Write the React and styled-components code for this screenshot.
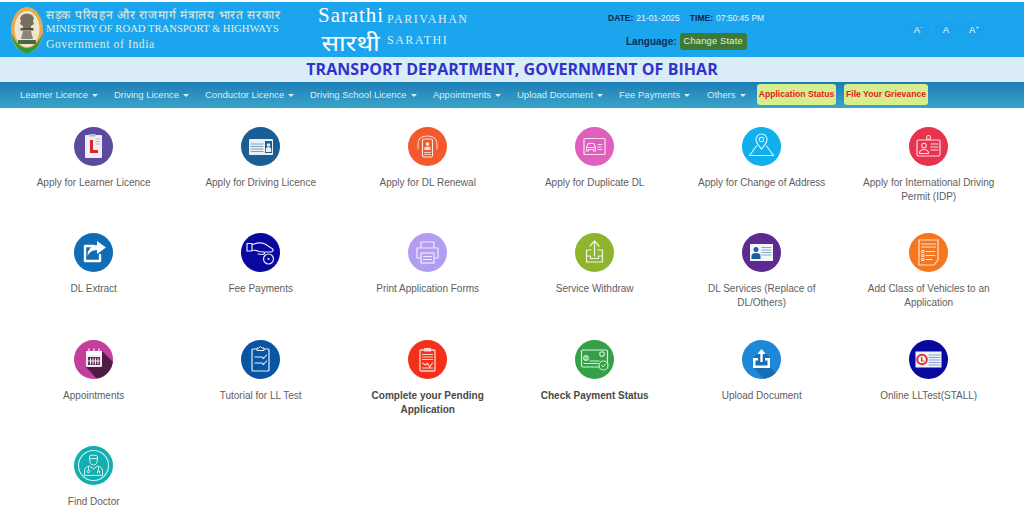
import React from 'react'
import styled, { createGlobalStyle } from 'styled-components'

const GlobalStyle = createGlobalStyle`
  html, body { margin: 0; padding: 0; background: #fff; overflow: hidden; }
  body { font-family: "Liberation Sans", Arial, sans-serif; }
`

const Page = styled.div`
  width: 1024px;
  height: 518px;
  padding-top: 2px;
  box-sizing: border-box;
  background: #fff;
`
const Header = styled.header`
  height: 55px;
  background: #1ca5ef;
  display: flex;
  align-items: center;
  padding-left: 11px;
  box-sizing: border-box;
`
const Emblem = styled.svg`
  width: 32px;
  height: 46px;
  flex: none;
`
const Ministry = styled.div`
  width: 274px;
  margin-left: 3px;
  flex: none;
  color: #e4ecd8;
  font-family: "Liberation Serif", serif;
`
const MinistryLine = styled.div`
  font-size: ${p => p.$size}px;
  letter-spacing: ${p => p.$spacing || 0}px;
  line-height: 14.5px;
  white-space: nowrap;
`
const Logo = styled.div`
  width: 62px;
  margin-right: 5px;
  flex: none;
  color: #fff;
  font-family: "Liberation Serif", serif;
  display: flex;
  flex-direction: column;
  align-items: center;
`
const LogoLatin = styled.span`
  font-size: 21px;
  line-height: 24px;
  letter-spacing: 0.9px;
`
const LogoHindi = styled.span`
  font-size: 22px;
  line-height: 30px;
  font-family: "Noto Sans", "Liberation Serif", serif;
  transform: scaleX(1.18);
`
const Brand = styled.div`
  width: 221px;
  flex: none;
  color: #dcecf4;
  font-family: "Liberation Serif", serif;
  font-size: 12px;
  letter-spacing: 1.5px;
  line-height: 21px;
`
const Clock = styled.div`
  width: 298px;
  flex: none;
  font-size: 8.5px;
  color: #e6f3fb;
`
const ClockRow = styled.div`
  display: flex;
  align-items: center;
  height: ${p => p.$height}px;
  padding-left: ${p => p.$indent}px;
  gap: ${p => p.$gap || 0}px;
`
const Label = styled.b`
  color: ${p => p.$dark ? '#0c2f5c' : '#10264a'};
  font-size: ${p => p.$size || 8.5}px;
  margin-right: 3px;
`
const StateButton = styled.span`
  background: #3f7a34;
  color: #e6efdc;
  font-size: 9.3px;
  padding: 0 4px;
  height: 17px;
  line-height: 17px;
  border-radius: 3px;
  letter-spacing: 0.2px;
`
const SizeButtons = styled.div`
  display: flex;
  gap: 4px;
`
const SizeButton = styled.span`
  width: 24px;
  height: 18px;
  line-height: 18px;
  text-align: center;
  font-size: 9.5px;
  color: #eef8fd;
  background: #1aa3ec;
  border-radius: 9px;
`
const Sup = styled.sup`
  font-size: 6px;
  line-height: 0;
`
const Band = styled.div`
  height: 25px;
  background: #d9ecf7;
  display: flex;
  align-items: center;
  justify-content: center;
  padding-bottom: 1px;
  box-sizing: border-box;
`
const Title = styled.h1`
  margin: 0;
  font-family: "Open Sans", sans-serif;
  font-size: 16px;
  font-weight: 700;
  color: #3232cc;
  letter-spacing: 0.05px;
`
const Nav = styled.nav`
  height: 26px;
  padding: 0 0 1px 20px;
  background: linear-gradient(#1d7db6, #3aa5ca);
  display: flex;
  align-items: center;
  box-sizing: border-box;
`
const NavItem = styled.a`
  width: ${p => p.$width}px;
  flex: none;
  color: #d8edf6;
  font-size: 9.5px;
  white-space: nowrap;
`
const Caret = styled.span`
  display: inline-block;
  margin-left: 4px;
  vertical-align: middle;
  border-top: 3px solid #d8edf6;
  border-left: 3px solid transparent;
  border-right: 3px solid transparent;
`
const Pill = styled.a`
  flex: none;
  width: ${p => p.$width}px;
  height: 21px;
  margin-right: 8px;
  line-height: 21px;
  text-align: center;
  background: #d6ee8e;
  color: #e4201a;
  font-size: 8.6px;
  font-weight: 700;
  border-radius: 3px;
  white-space: nowrap;
`
const Grid = styled.main`
  display: grid;
  grid-template-columns: repeat(6, 167px);
  grid-auto-rows: 106.4px;
  padding-left: 10.2px;
`
const Tile = styled.a`
  display: flex;
  flex-direction: column;
  align-items: center;
  padding-top: 19px;
  box-sizing: border-box;
`
const Badge = styled.span`
  width: 39px;
  height: 39px;
  flex: none;
  border-radius: 50%;
  overflow: hidden;
  background: ${p => p.$bg};
  svg { display: block; width: 39px; height: 39px; }
`
const Caption = styled.span`
  margin-top: 10px;
  width: 150px;
  text-align: center;
  color: ${p => p.$bold ? '#484848' : '#5e5e5e'};
  font-size: 10px;
  font-weight: ${p => p.$bold ? 700 : 400};
  line-height: 14px;
`

const Line = ({ d, w = 1, c = '#fff' }) => (
  <path d={d} fill="none" stroke={c} strokeWidth={w} strokeLinecap="round" strokeLinejoin="round" />
)

const icons = {
  learner: (
    <>
      <rect x="11" y="8" width="17" height="23" rx="1" fill="#f1eff6" />
      <rect x="15" y="7" width="7" height="2.5" fill="#b9b4cf" />
      <path d="M16 13h3v10h5v3h-8z" fill="#d9252b" />
      <Line d="M22 12h4M22 14.5h4M22 17h4" w={0.8} c="#c9a0b0" />
    </>
  ),
  driving: (
    <>
      <rect x="8" y="12" width="24" height="16" rx="1" fill="#e9f0f6" />
      <rect x="24" y="14" width="7" height="12" fill="#1a5e96" />
      <circle cx="27.5" cy="18" r="1.8" fill="#e9f0f6" />
      <path d="M24.8 25v-3q0-2 2.7-2t2.7 2v3z" fill="#e9f0f6" />
      <Line d="M10 17h12M10 19.5h12M10 22h12M10 24.5h12" w={1} c="#7fa3c2" />
    </>
  ),
  renewal: (
    <>
      <Line d="M10 22v-5q0-8 9.500-8t9.500 8v5" w={1.100} c="#fbd2c2" />
      <rect x="14.500" y="12" width="10" height="18" rx="1.500" fill="none" stroke="#fde6dc" strokeWidth="1.100" />
      <circle cx="19.500" cy="17" r="1.800" fill="#fde6dc" />
      <path d="M16.500 23v-2q0-1.500 3-1.500t3 1.500v2z" fill="#fde6dc" />
      <Line d="M16.500 25.500h6M16.500 27.500h6" w={0.8} c="#fde6dc" />
    </>
  ),
  duplicate: (
    <>
      <rect x="9" y="11.500" width="21" height="16" rx="1" fill="none" stroke="#fbdff2" strokeWidth="1.200" />
      <path d="M11.500 24v-4l1.800-3.500h5.400l1.800 3.500v4h-2v-1.500h-5V24z" fill="none" stroke="#fbdff2" strokeWidth="1.100" />
      <Line d="M12 20.500h8" w={1} c="#fbdff2" />
      <Line d="M23 17.500h4M23 20h3M23 22.500h4" w={1} c="#fbdff2" />
    </>
  ),
  address: (
    <>
      <path d="M19.500 22q-5.500-6-5.500-9.500a5.500 5.500 0 0 1 11 0q0 3.500-5.500 9.500z" fill="none" stroke="#d8f2fd" strokeWidth="1.200" />
      <circle cx="19.500" cy="12.500" r="2.200" fill="none" stroke="#d8f2fd" strokeWidth="1.100" />
      <Line d="M14.500 19l-7 9.500h24l-7-9.500" w={1.200} c="#d8f2fd" />
    </>
  ),
  idp: (
    <>
      <rect x="8" y="13" width="23" height="16" rx="1.500" fill="none" stroke="#fbdbe0" strokeWidth="1.200" />
      <circle cx="19.500" cy="10.500" r="2" fill="none" stroke="#fbdbe0" strokeWidth="1.100" />
      <circle cx="15" cy="18.500" r="2.300" fill="none" stroke="#fbdbe0" strokeWidth="1.100" />
      <Line d="M10.500 26.500q0-4 4.500-4t4.500 4z" w={1.100} c="#fbdbe0" />
      <Line d="M22 17h7M22 20h7M22 23h7" w={1.200} c="#fbdbe0" />
    </>
  ),
  extract: (
    <>
      <Line d="M20 13h-9v15h15v-6" w={2.400} />
      <path d="M23 8l9 6.500-9 6.500v-4q-7 0-9.500 6 0-10 9.500-11z" fill="#fff" />
    </>
  ),
  fee: (
    <>
      <Line d="M6 10.500h5v7.500h-5zM11 12q7-3.500 13-1l7 4.500q2.500 2-.5 3.500h-6M11 17q4 0 7 1.500l5 .5q1.500 1.800-1 2.500l-5-.5" w={1.200} c="#e6e8ff" />
      <circle cx="27.500" cy="26" r="5" fill="none" stroke="#e6e8ff" strokeWidth="1.200" />
      <circle cx="27.500" cy="26" r="1.100" fill="#e6e8ff" />
    </>
  ),
  print: (
    <>
      <Line d="M13 15V9h13v6M13 25H9V15h21v10h-4" w={1.200} c="#f1ecff" />
      <rect x="13" y="20" width="13" height="10" fill="none" stroke="#f1ecff" strokeWidth="1.200" />
      <Line d="M15.500 23.500h8M15.500 26.500h8" w={1} c="#f1ecff" />
    </>
  ),
  withdraw: (
    <>
      <Line d="M16 17h-4.500v12h16V17H23M19.500 23V8M15 13l4.500-5 4.500 5" w={1.200} c="#f1f6df" />
      <Line d="M11.500 23h4v2.500h8V23h4" w={1.100} c="#f1f6df" />
    </>
  ),
  services: (
    <>
      <rect x="8" y="11" width="23" height="17" fill="#f3f6fb" />
      <circle cx="14" cy="16.500" r="2.500" fill="#1a5ea6" />
      <path d="M9.500 26v-3q0-3 4.500-3t4.500 3v3z" fill="#1a5ea6" />
      <Line d="M20 14.500h9M20 17h9M20 19.500h9M20 22h9" w={1} c="#8aa6c8" />
    </>
  ),
  vehicles: (
    <>
      <path d="M10 7h19v20l-4 5H10z" fill="none" stroke="#fde3cf" strokeWidth="1.200" />
      <Line d="M12.500 11h14M12.500 14h14" w={1} c="#fde3cf" />
      <Line d="M13 17.500h2v2h-2zM13 21.500h2v2h-2zM13 25.500h2v2h-2zM17 18.500h9M17 22.500h9M17 26.500h6" w={1} c="#fde3cf" />
    </>
  ),
  appointments: (
    <>
      <path d="M12 27L28 11 50 33 33 50z" fill="#4f1c44" />
      <rect x="12" y="11" width="16" height="16" rx="1" fill="#f6eaf3" />
      <rect x="12" y="11" width="16" height="4" fill="#fff" />
      <Line d="M15 9v4M20 9v4M25 9v4" w={1.300} c="#f6eaf3" />
      <path d="M14 17h12v8H14z" fill="#5e2a55" />
      <Line d="M16.500 18.500v5.500M19 18.500v5.500M21.500 18.500v5.500M24 18.500v5.500M14.500 21h11" w={1.100} c="#f6eaf3" />
    </>
  ),
  tutorial: (
    <>
      <rect x="11" y="9" width="17" height="22" rx="1" fill="none" stroke="#e6f0fa" strokeWidth="1.200" />
      <path d="M16 10.500V8h2l1.500-1.500L21 8h2v2.500z" fill="#0a54a4" stroke="#e6f0fa" strokeWidth="1" />
      <Line d="M14 17h6M14 23h6M21 17l1.500 1.500 3-3.500M21 23l1.500 1.500 3-3.500" w={1.100} c="#e6f0fa" />
    </>
  ),
  complete: (
    <>
      <rect x="12" y="10" width="15" height="21" rx="1" fill="none" stroke="#fcd6cc" strokeWidth="1.300" />
      <rect x="16" y="8" width="7" height="3.500" fill="#fcd6cc" />
      <Line d="M14.500 14.500h10M14.500 17h10M14.500 19.500h10" w={1.100} c="#fcd6cc" />
      <Line d="M14.500 23l3 2 2-2 2 4 3-4M14.500 28h10" w={1.100} c="#fcd6cc" />
    </>
  ),
  payment: (
    <>
      <rect x="6.500" y="10" width="26" height="17" rx="1.500" fill="none" stroke="#d9f0dc" strokeWidth="1.200" />
      <circle cx="11" cy="18" r="2.300" fill="none" stroke="#d9f0dc" strokeWidth="1.100" />
      <Line d="M11 15.500v5M15 21h9M9 23.500h14" w={1} c="#d9f0dc" />
      <circle cx="27" cy="14" r="2.300" fill="none" stroke="#d9f0dc" strokeWidth="1.100" />
      <circle cx="28.500" cy="25.500" r="4.500" fill="#36a048" stroke="#d9f0dc" strokeWidth="1.100" />
      <Line d="M26.500 25.500l1.500 1.500 2.500-3" w={1} c="#d9f0dc" />
    </>
  ),
  upload: (
    <>
      <path d="M11 27L11 18 19.500 10 28 18 28 27 50 49 33 50z" fill="#166fb5" />
      <path d="M11 18h5v2.500h-2.500v5h12v-5H23V18h5v10H11z" fill="#fff" />
      <path d="M18.300 22v-8h-3l4.200-5 4.200 5h-3v8z" fill="#fff" />
    </>
  ),
  online: (
    <>
      <rect x="6.500" y="11.500" width="26" height="16" fill="#eef2fb" />
      <circle cx="13" cy="19.500" r="4.800" fill="none" stroke="#e6302a" strokeWidth="2" />
      <path d="M12 17h1.300v3.500H15v1h-3z" fill="#e6302a" />
      <Line d="M20 15h11M20 17.500h11M20 20h11M20 22.500h11M20 25h11" w={1.100} c="#8a9fd4" />
    </>
  ),
  doctor: (
    <>
      <circle cx="19.500" cy="19.500" r="15" fill="none" stroke="#d6f3f3" strokeWidth="1.100" />
      <Line d="M15.500 13v-3q4-2 8 0v3M15.500 13q0 6 4 6t4-6z" w={1} c="#d6f3f3" />
      <Line d="M10.500 29v-4q0-4 5-5l4 3 4-3q5 1 5 5v4zM14.500 21v3M24.500 21v3" w={1} c="#d6f3f3" />
      <circle cx="14.500" cy="25.500" r="1.300" fill="none" stroke="#d6f3f3" strokeWidth="1" />
      <Line d="M23.500 27v-2h2v2" w={1} c="#d6f3f3" />
    </>
  ),
}

const tiles = [
  { label: 'Apply for Learner Licence', icon: 'learner', bg: '#5b4a9e' },
  { label: 'Apply for Driving Licence', icon: 'driving', bg: '#1a5e96' },
  { label: 'Apply for DL Renewal', icon: 'renewal', bg: '#f25a2e' },
  { label: 'Apply for Duplicate DL', icon: 'duplicate', bg: '#e05fbd' },
  { label: 'Apply for Change of Address', icon: 'address', bg: '#0fb0ec' },
  { label: 'Apply for International Driving Permit (IDP)', icon: 'idp', bg: '#e6344f' },
  { label: 'DL Extract', icon: 'extract', bg: '#0f6cb5' },
  { label: 'Fee Payments', icon: 'fee', bg: '#08089e' },
  { label: 'Print Application Forms', icon: 'print', bg: '#b39df0' },
  { label: 'Service Withdraw', icon: 'withdraw', bg: '#8fb52e' },
  { label: 'DL Services (Replace of DL/Others)', icon: 'services', bg: '#5c2a91' },
  { label: 'Add Class of Vehicles to an Application', icon: 'vehicles', bg: '#f5761e' },
  { label: 'Appointments', icon: 'appointments', bg: '#c43f9c' },
  { label: 'Tutorial for LL Test', icon: 'tutorial', bg: '#0a54a4' },
  { label: 'Complete your Pending Application', icon: 'complete', bg: '#f4301a', bold: true },
  { label: 'Check Payment Status', icon: 'payment', bg: '#36a048', bold: true },
  { label: 'Upload Document', icon: 'upload', bg: '#1e88d8' },
  { label: 'Online LLTest(STALL)', icon: 'online', bg: '#08089e' },
  { label: 'Find Doctor', icon: 'doctor', bg: '#12aeb0' },
]

const menu = [
  ['Learner Licence', 94],
  ['Driving Licence', 91],
  ['Conductor Licence', 105],
  ['Driving School Licence', 123],
  ['Appointments', 84],
  ['Upload Document', 102],
  ['Fee Payments', 88],
  ['Others', 50],
]

export default function App() {
  return (
    <Page>
      <GlobalStyle />
      <Header>
        <Emblem viewBox="0 0 32 46">
          <ellipse cx="16" cy="23" rx="16" ry="23" fill="#e8a94f" />
          <path d="M0.500 26C2 38 9 46 16 46s14-8 15.500-20C28 36 22 41 16 41S4 36 0.500 26z" fill="#2f9a3a" />
          <ellipse cx="16" cy="22" rx="12.500" ry="18" fill="#efe6d2" />
          <path d="M11 8q5-3 10 0l2 3-1 3 1 3-3 2v2h-8v-2l-3-2 1-3-1-3z" fill="#77705f" />
          <rect x="9.500" y="21" width="13" height="2.500" fill="#55503f" />
          <path d="M12 24h8l2 8H10z" fill="#8c8573" />
          <rect x="7" y="33" width="18" height="4" rx="1" fill="#3e6b42" />
        </Emblem>
        <Ministry>
          <MinistryLine $size={12} $spacing={0.72}>सड़क परिवहन और राजमार्ग मंत्रालय भारत सरकार</MinistryLine>
          <MinistryLine $size={10.65}>MINISTRY OF ROAD TRANSPORT &amp; HIGHWAYS</MinistryLine>
          <MinistryLine $size={11.5} $spacing={0.65}>Government of India</MinistryLine>
        </Ministry>
        <Logo>
          <LogoLatin>Sarathi</LogoLatin>
          <LogoHindi>सारथी</LogoHindi>
        </Logo>
        <Brand>
          <div>PARIVAHAN</div>
          <div>SARATHI</div>
        </Brand>
        <Clock>
          <ClockRow $height={23} $indent={0} $gap={10}>
            <span><Label>DATE:</Label>21-01-2025</span>
            <span><Label>TIME:</Label>07:50:45 PM</span>
          </ClockRow>
          <ClockRow $height={23} $indent={18}>
            <Label $dark $size={10}>Language:</Label>
            <StateButton>Change State</StateButton>
          </ClockRow>
        </Clock>
        <SizeButtons>
          <SizeButton>A<Sup>-</Sup></SizeButton>
          <SizeButton>A</SizeButton>
          <SizeButton>A<Sup>+</Sup></SizeButton>
        </SizeButtons>
      </Header>
      <Band>
        <Title>TRANSPORT DEPARTMENT, GOVERNMENT OF BIHAR</Title>
      </Band>
      <Nav>
        {menu.map(([name, width]) => (
          <NavItem key={name} $width={width}>{name}<Caret /></NavItem>
        ))}
        <Pill $width={79}>Application Status</Pill>
        <Pill $width={84}>File Your Grievance</Pill>
      </Nav>
      <Grid>
        {tiles.map(t => (
          <Tile key={t.label}>
            <Badge $bg={t.bg}><svg viewBox="0 0 39 39">{icons[t.icon]}</svg></Badge>
            <Caption $bold={t.bold}>{t.label}</Caption>
          </Tile>
        ))}
      </Grid>
    </Page>
  )
}
